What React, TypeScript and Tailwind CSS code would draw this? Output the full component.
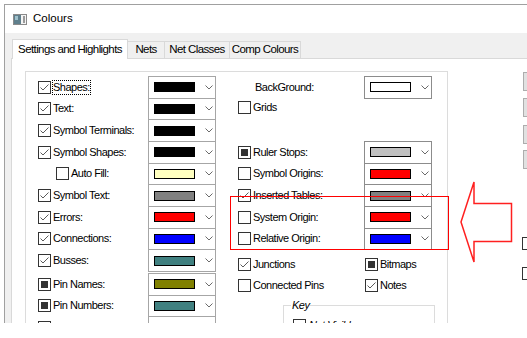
import clsx from "clsx";

type CheckState = "checked" | "unchecked" | "mixed";

const leftRows: Array<{ label: string; state: CheckState; color: string; indent?: boolean; gap?: boolean; focus?: boolean }> = [
  { label: "Shapes:", state: "checked", color: "#000000", focus: true },
  { label: "Text:", state: "checked", color: "#000000" },
  { label: "Symbol Terminals:", state: "checked", color: "#000000" },
  { label: "Symbol Shapes:", state: "checked", color: "#000000" },
  { label: "Auto Fill:", state: "unchecked", color: "#ffffc0", indent: true },
  { label: "Symbol Text:", state: "checked", color: "#808080" },
  { label: "Errors:", state: "checked", color: "#ff0000" },
  { label: "Connections:", state: "checked", color: "#0000ff" },
  { label: "Busses:", state: "checked", color: "#408080" },
  { label: "Pin Names:", state: "mixed", color: "#808000", gap: true },
  { label: "Pin Numbers:", state: "mixed", color: "#408080" },
  { label: "", state: "unchecked", color: "#ffffff" },
];

const midRows: Array<{ label: string; state: CheckState; color: string }> = [
  { label: "Ruler Stops:", state: "mixed", color: "#c0c0c0" },
  { label: "Symbol Origins:", state: "unchecked", color: "#ff0000" },
  { label: "Inserted Tables:", state: "checked", color: "#808080" },
  { label: "System Origin:", state: "unchecked", color: "#ff0000" },
  { label: "Relative Origin:", state: "unchecked", color: "#0000ff" },
];

function CheckBox({ state }: { state: CheckState }) {
  return (
    <span className="flex h-[13px] w-[13px] shrink-0 items-center justify-center border border-[#333333] bg-white">
      {state === "checked" && (
        <svg width="11" height="11" viewBox="0 0 11 11">
          <path d="M1.5 5.5 L4 8 L9.5 2.5" fill="none" stroke="#5a5a5a" strokeWidth="1" />
        </svg>
      )}
      {state === "mixed" && <span className="h-[7px] w-[7px] bg-[#333333]" />}
    </span>
  );
}

function CheckRow({ state, label, focus }: { state: CheckState; label: string; focus?: boolean }) {
  return (
    <div className="flex items-center">
      <CheckBox state={state} />
      <span className={clsx("ml-[2px] whitespace-nowrap leading-[13px]", focus && "outline-1 outline-dotted outline-black")}>{label}</span>
    </div>
  );
}

function ColourCombo({ color, dark, className }: { color: string; dark?: boolean; className?: string }) {
  return (
    <div
      className={clsx(
        "flex h-[22.67px] w-[68px] shrink-0 items-center border bg-white",
        dark ? "border-[#8c8c8c]" : "border-[#a6a6a6]",
        className,
      )}
    >
      <span className="ml-[5px] h-[10px] w-[41px] border border-black" style={{ backgroundColor: color }} />
      <svg className="ml-[10px]" width="8" height="5" viewBox="0 0 8 5">
        <path d="M0.5 0.5 L4 4 L7.5 0.5" fill="none" stroke="#6a6a6a" strokeWidth="1" />
      </svg>
    </div>
  );
}

export default function App() {
  return (
    <div className="relative h-[338px] w-[527px] overflow-hidden bg-white font-['Liberation_Sans',sans-serif] text-[11px] tracking-[-0.5px] text-black">
      <div className="ml-[4px] mt-[4px] flex h-[319px] w-[600px] flex-col overflow-hidden border-l border-t border-[#a0a0a0]">
        {/* title bar */}
        <div className="flex h-[28px] shrink-0 items-center bg-white pl-[8px]">
          <svg width="14" height="11" viewBox="0 0 14 11">
            <rect x="0.5" y="0.5" width="13" height="10" fill="#f4f4f4" stroke="#8a8a8a" />
            <rect x="1" y="1" width="7" height="9" fill="#5f7f8c" />
            <rect x="2" y="2" width="3" height="4" fill="#9fc1cc" />
            <rect x="10" y="2" width="2" height="7" fill="#9a9a9a" />
          </svg>
          <span className="ml-[6px] text-[11.5px] tracking-normal">Colours</span>
        </div>

        <div className="flex flex-1 flex-col bg-[#f0f0f0] pl-[6px]">
          {/* tabs */}
          <div className="flex h-[25px] shrink-0 items-end whitespace-nowrap pl-px text-[11.5px] tracking-[-0.6px]">
            <div className="relative z-10 -mb-px flex h-[20px] w-[116px] items-center justify-center border-x border-t border-[#d9d9d9] bg-white">
              Settings and Highlights
            </div>
            <div className="flex h-[17px] w-[37px] items-center justify-center border-r border-t border-[#d9d9d9]">Nets</div>
            <div className="flex h-[17px] w-[65px] items-center justify-center border-r border-t border-[#d9d9d9]">Net Classes</div>
            <div className="flex h-[17px] w-[71px] items-center justify-center border-r border-t border-[#d9d9d9]">Comp Colours</div>
          </div>

          {/* tab page */}
          <div className="flex flex-1 border-l border-t border-[#d9d9d9] bg-white pl-[13px] pt-[12px]">
            <div className="flex h-[400px] w-[423px] shrink-0 border border-[#dcdcdc] pl-[12px] pt-[4px]">
              {/* left labels */}
              <div className="flex w-[110px] flex-col pt-[0.5px]">
                {leftRows.map((row, i) => (
                  <div
                    key={i}
                    className={clsx("flex h-[21.67px] items-center", row.indent && "pl-[18px]", row.gap && "mt-[2px]")}
                  >
                    <CheckRow state={row.state} label={row.label} focus={row.focus} />
                  </div>
                ))}
              </div>
              {/* left combos */}
              <div className="flex flex-col">
                {leftRows.map((row, i) => (
                  <ColourCombo key={i} color={row.color} className={i === 0 ? "" : row.gap ? "mt-px" : "-mt-px"} />
                ))}
              </div>

              {/* middle column */}
              <div className="ml-[22px] flex w-[194px] flex-col">
                <div className="flex">
                  <div className="flex w-[126px] flex-col pt-[0.5px]">
                    <div className="flex h-[21.67px] items-center pl-[17px]">BackGround:</div>
                    <div className="flex h-[21.67px] items-start pt-[3px]">
                      <CheckRow state="unchecked" label="Grids" />
                    </div>
                    <div className="h-[21.67px]" />
                    {midRows.map((row) => (
                      <div key={row.label} className="flex h-[21.67px] items-center">
                        <CheckRow state={row.state} label={row.label} />
                      </div>
                    ))}
                  </div>
                  <div className="flex flex-col">
                    <ColourCombo color="#ffffff" dark />
                    <div className="h-[42.33px]" />
                    {midRows.map((row, i) => (
                      <ColourCombo key={row.label} color={row.color} dark className={i === 0 ? "" : "-mt-px"} />
                    ))}
                  </div>
                </div>

                <div className="mt-[4px] flex h-[21px] items-center">
                  <div className="w-[127px]">
                    <CheckRow state="checked" label="Junctions" />
                  </div>
                  <CheckRow state="mixed" label="Bitmaps" />
                </div>
                <div className="flex h-[21px] items-center">
                  <div className="w-[127px]">
                    <CheckRow state="unchecked" label="Connected Pins" />
                  </div>
                  <CheckRow state="checked" label="Notes" />
                </div>

                <fieldset className="ml-[45px] mt-[3px] w-[152px] border border-[#dcdcdc] px-[9px] pb-[6px]">
                  <legend className="-ml-[2px] px-px italic leading-[13px]">Key</legend>
                  <div className="mt-[5px] flex items-center italic">
                    <CheckBox state="unchecked" />
                    <span className="ml-[3px]">Not Visible</span>
                  </div>
                </fieldset>
              </div>
            </div>

            {/* buttons at the right, cut by the window edge */}
            <div className="ml-[75px] flex flex-col pt-px">
              <div className="h-[19px] w-[75px] border border-[#adadad] bg-[#e1e1e1]" />
              <div className="mt-[7px] h-[19px] w-[75px] border border-[#adadad] bg-[#e1e1e1]" />
              <div className="mt-[8px] h-[19px] w-[75px] border border-[#adadad] bg-[#e1e1e1]" />
              <div className="mt-[6px] h-[19px] w-[75px] border border-[#adadad] bg-[#e1e1e1]" />
              <div className="-ml-px mt-[68px]">
                <CheckBox state="unchecked" />
              </div>
              <div className="-ml-px mt-[17px]">
                <CheckBox state="unchecked" />
              </div>
            </div>
          </div>
        </div>
      </div>

      {/* annotation */}
      <div className="absolute left-[230px] top-[196px] h-[54px] w-[219px] border border-[#ff0000]" />
      <svg className="pointer-events-none absolute left-0 top-0" width="527" height="338" viewBox="0 0 527 338">
        <polygon
          points="461,222 474,182 474,203.5 511.5,203.5 511.5,241.5 474,241.5 474,262"
          fill="none"
          stroke="#ff2020"
          strokeWidth="1.5"
        />
      </svg>
    </div>
  );
}
